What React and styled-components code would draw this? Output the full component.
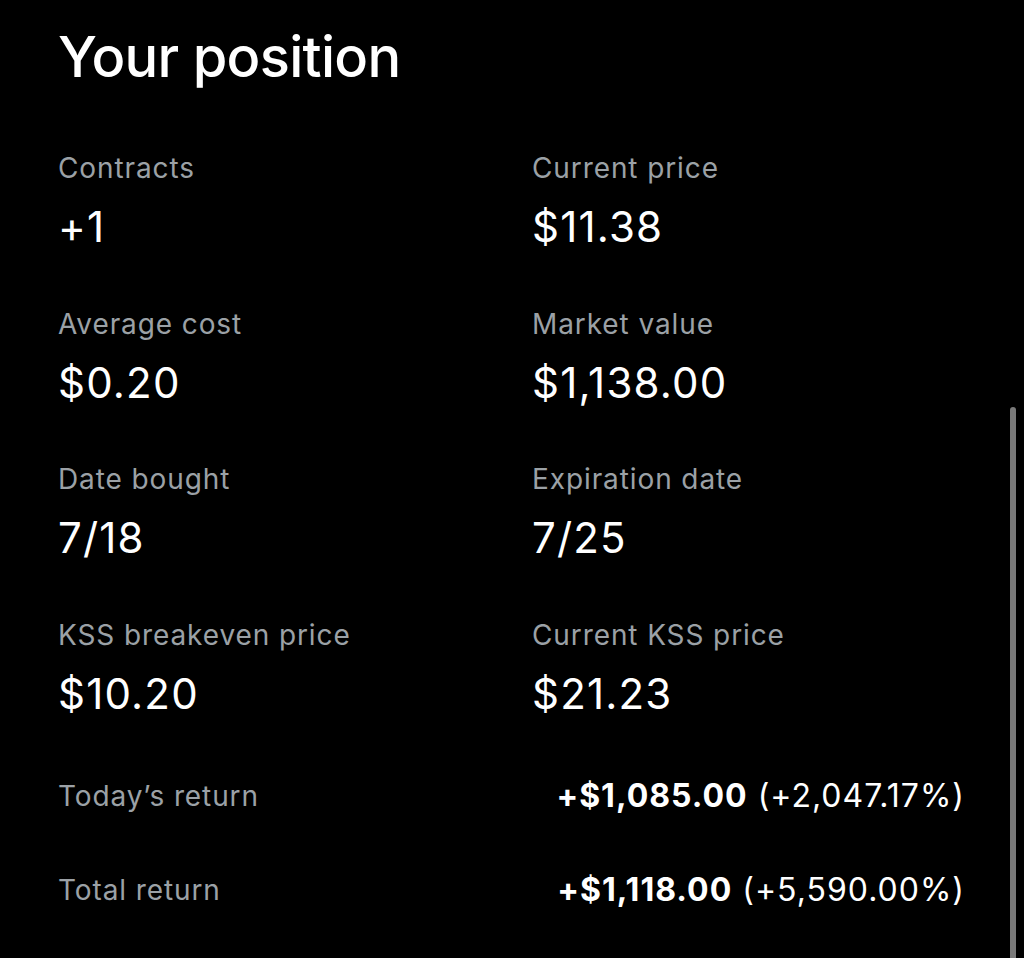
import React from "react";
import styled, { createGlobalStyle } from "styled-components";

const GlobalStyle = createGlobalStyle`
  html, body {
    margin: 0;
    background: #000;
  }
  body {
    font-family: Inter, "Noto Sans", sans-serif;
    color: #fff;
    -webkit-font-smoothing: antialiased;
  }
`;

const Page = styled.div`
  position: relative;
  width: 1024px;
  height: 958px;
  overflow: hidden;
  box-sizing: border-box;
  padding: 23px 59px 0 58px;
  background: #000;
`;

const Title = styled.h1`
  margin: 0;
  font-size: 56px;
  line-height: 68px;
  font-weight: 500;
  letter-spacing: -0.7px;
`;

const Grid = styled.div`
  display: grid;
  grid-template-columns: 474px 1fr;
  row-gap: 55.5px;
  margin-top: 60px;
`;

const Cell = styled.div`
  display: flex;
  flex-direction: column;
  gap: 18px;
`;

const Label = styled.span`
  font-size: 28px;
  line-height: 34px;
  letter-spacing: 0.9px;
  color: #9ba1a6;
`;

const Value = styled.span`
  font-size: 42px;
  line-height: 48px;
  letter-spacing: 1.2px;
  color: #fff;
`;

const Returns = styled.div`
  display: flex;
  flex-direction: column;
  gap: 54px;
  margin-top: 58px;
`;

const ReturnRow = styled.div`
  display: flex;
  justify-content: space-between;
  align-items: center;
  height: 40px;
`;

const Amount = styled.span`
  font-size: 32px;
  letter-spacing: 1px;
  color: #fff;
`;

const Strong = styled.b`
  font-weight: 700;
`;

const Scrollbar = styled.div`
  position: absolute;
  right: 8px;
  top: 407px;
  bottom: 0;
  width: 6px;
  border-radius: 3px 3px 0 0;
  background: #7a7a7a;
`;

const fields = [
  ["Contracts", "+1"],
  ["Current price", "$11.38"],
  ["Average cost", "$0.20"],
  ["Market value", "$1,138.00"],
  ["Date bought", "7/18"],
  ["Expiration date", "7/25"],
  ["KSS breakeven price", "$10.20"],
  ["Current KSS price", "$21.23"],
];

const returns = [
  ["Today\u2019s return", "+$1,085.00", "(+2,047.17%)"],
  ["Total return", "+$1,118.00", "(+5,590.00%)"],
];

export default function App() {
  return (
    <>
      <GlobalStyle />
      <Page>
        <Title>Your position</Title>
        <Grid>
          {fields.map(([label, value]) => (
            <Cell key={label}>
              <Label>{label}</Label>
              <Value>{value}</Value>
            </Cell>
          ))}
        </Grid>
        <Returns>
          {returns.map(([label, amount, pct]) => (
            <ReturnRow key={label}>
              <Label>{label}</Label>
              <Amount>
                <Strong>{amount}</Strong> {pct}
              </Amount>
            </ReturnRow>
          ))}
        </Returns>
        <Scrollbar />
      </Page>
    </>
  );
}
